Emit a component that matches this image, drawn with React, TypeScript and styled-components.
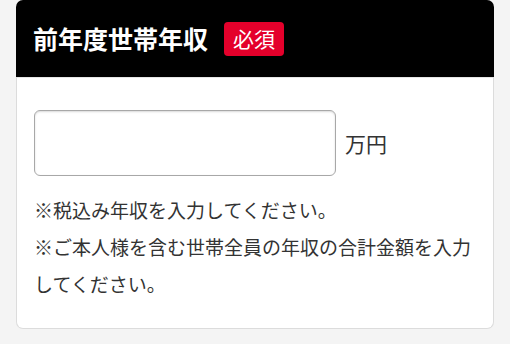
import React from 'react';
import styled, { createGlobalStyle } from 'styled-components';

const GlobalStyle = createGlobalStyle`
  html, body {
    margin: 0;
    padding: 0;
    background: #f4f4f4;
    font-family: "Noto Sans CJK JP", "Noto Sans", sans-serif;
  }
`;

const Page = styled.div`
  padding: 0 16px;
`;

const Card = styled.section`
  display: flex;
  flex-direction: column;
`;

const Header = styled.header`
  display: flex;
  align-items: center;
  gap: 16px;
  height: 77px;
  padding: 0 17px;
  background: #000;
  border-radius: 7px 7px 0 0;
  > h2 {
    margin: 0;
    color: #fff;
    font-size: 25px;
    font-weight: 700;
    line-height: 1;
  }
`;

const Badge = styled.span`
  display: inline-flex;
  align-items: center;
  height: 34px;
  padding: 0 9px;
  background: #e4002b;
  color: #fff;
  font-size: 21px;
  line-height: 1;
  border-radius: 4px;
`;

const Body = styled.div`
  background: #fff;
  border: 1px solid #dcdcdc;
  border-top-color: #e6e6e6;
  border-radius: 0 0 7px 7px;
  padding: 32px 17px 26px;
`;

const InputRow = styled.div`
  display: flex;
  align-items: center;
  gap: 9px;
  > span {
    font-size: 21px;
    color: #333;
  }
`;

const AmountInput = styled.input`
  box-sizing: border-box;
  width: 302px;
  height: 66px;
  border: 1px solid #a8a8a8;
  border-radius: 6px;
  box-shadow: inset 0 1px 2px rgba(0, 0, 0, 0.15);
  background: #fff;
  font-size: 20px;
  padding: 0 12px;
  outline: none;
`;

const Notes = styled.div`
  margin-top: 15px;
  color: #333;
  font-size: 19px;
  line-height: 37px;
  > p {
    margin: 0;
  }
`;

export default function App() {
  return (
    <>
      <GlobalStyle />
      <Page>
        <Card>
          <Header>
            <h2>前年度世帯年収</h2>
            <Badge>必須</Badge>
          </Header>
          <Body>
            <InputRow>
              <AmountInput type="text" inputMode="numeric" />
              <span>万円</span>
            </InputRow>
            <Notes>
              <p>※税込み年収を入力してください。</p>
              <p>※ご本人様を含む世帯全員の年収の合計金額を入力してください。</p>
            </Notes>
          </Body>
        </Card>
      </Page>
    </>
  );
}
